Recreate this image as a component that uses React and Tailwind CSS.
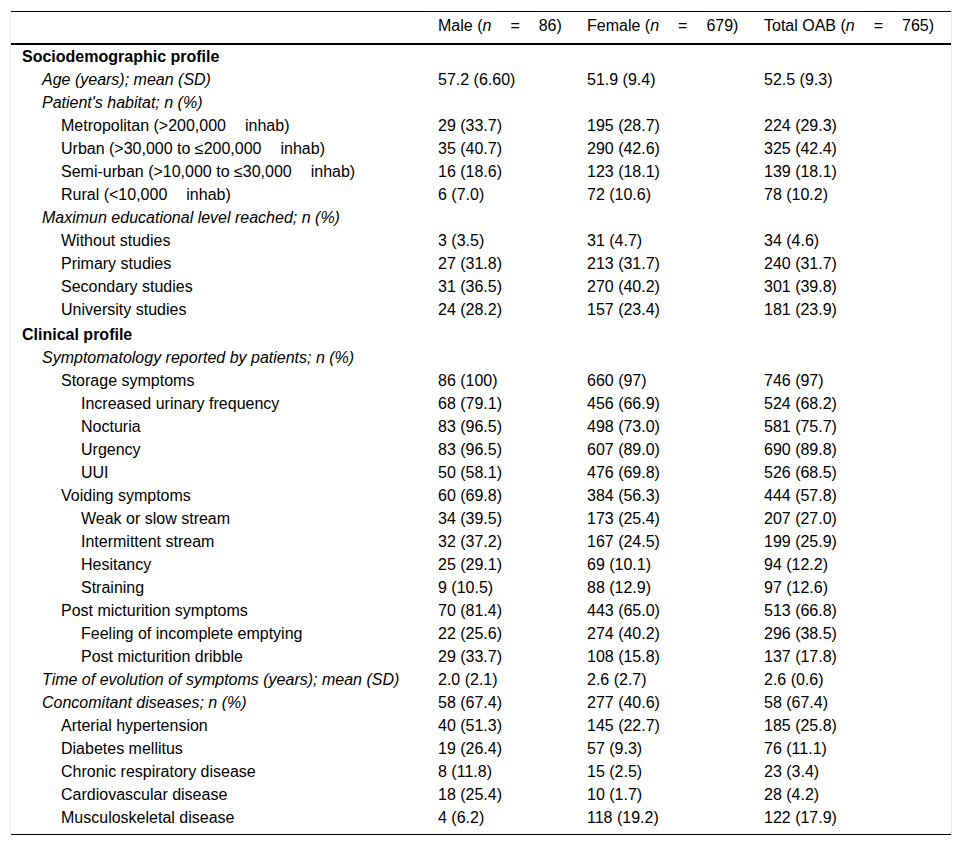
const rows = [
  { label: 'Sociodemographic profile', level: 0, bold: true },
  { label: 'Age (years); mean (SD)', level: 1, italic: true, v: ['57.2 (6.60)', '51.9 (9.4)', '52.5 (9.3)'] },
  { label: "Patient's habitat; n (%)", level: 1, italic: true },
  { label: 'Metropolitan (>200,000|inhab)', level: 2, v: ['29 (33.7)', '195 (28.7)', '224 (29.3)'] },
  { label: 'Urban (>30,000 to ≤200,000|inhab)', level: 2, v: ['35 (40.7)', '290 (42.6)', '325 (42.4)'] },
  { label: 'Semi-urban (>10,000 to ≤30,000|inhab)', level: 2, v: ['16 (18.6)', '123 (18.1)', '139 (18.1)'] },
  { label: 'Rural (<10,000|inhab)', level: 2, v: ['6 (7.0)', '72 (10.6)', '78 (10.2)'] },
  { label: 'Maximun educational level reached; n (%)', level: 1, italic: true },
  { label: 'Without studies', level: 2, v: ['3 (3.5)', '31 (4.7)', '34 (4.6)'] },
  { label: 'Primary studies', level: 2, v: ['27 (31.8)', '213 (31.7)', '240 (31.7)'] },
  { label: 'Secondary studies', level: 2, v: ['31 (36.5)', '270 (40.2)', '301 (39.8)'] },
  { label: 'University studies', level: 2, v: ['24 (28.2)', '157 (23.4)', '181 (23.9)'] },
  { label: 'Clinical profile', level: 0, bold: true, gapAbove: true },
  { label: 'Symptomatology reported by patients; n (%)', level: 1, italic: true },
  { label: 'Storage symptoms', level: 2, v: ['86 (100)', '660 (97)', '746 (97)'] },
  { label: 'Increased urinary frequency', level: 3, v: ['68 (79.1)', '456 (66.9)', '524 (68.2)'] },
  { label: 'Nocturia', level: 3, v: ['83 (96.5)', '498 (73.0)', '581 (75.7)'] },
  { label: 'Urgency', level: 3, v: ['83 (96.5)', '607 (89.0)', '690 (89.8)'] },
  { label: 'UUI', level: 3, v: ['50 (58.1)', '476 (69.8)', '526 (68.5)'] },
  { label: 'Voiding symptoms', level: 2, v: ['60 (69.8)', '384 (56.3)', '444 (57.8)'] },
  { label: 'Weak or slow stream', level: 3, v: ['34 (39.5)', '173 (25.4)', '207 (27.0)'] },
  { label: 'Intermittent stream', level: 3, v: ['32 (37.2)', '167 (24.5)', '199 (25.9)'] },
  { label: 'Hesitancy', level: 3, v: ['25 (29.1)', '69 (10.1)', '94 (12.2)'] },
  { label: 'Straining', level: 3, v: ['9 (10.5)', '88 (12.9)', '97 (12.6)'] },
  { label: 'Post micturition symptoms', level: 2, v: ['70 (81.4)', '443 (65.0)', '513 (66.8)'] },
  { label: 'Feeling of incomplete emptying', level: 3, v: ['22 (25.6)', '274 (40.2)', '296 (38.5)'] },
  { label: 'Post micturition dribble', level: 3, v: ['29 (33.7)', '108 (15.8)', '137 (17.8)'] },
  { label: 'Time of evolution of symptoms (years); mean (SD)', level: 1, italic: true, v: ['2.0 (2.1)', '2.6 (2.7)', '2.6 (0.6)'] },
  { label: 'Concomitant diseases; n (%)', level: 1, italic: true, v: ['58 (67.4)', '277 (40.6)', '58 (67.4)'] },
  { label: 'Arterial hypertension', level: 2, v: ['40 (51.3)', '145 (22.7)', '185 (25.8)'] },
  { label: 'Diabetes mellitus', level: 2, v: ['19 (26.4)', '57 (9.3)', '76 (11.1)'] },
  { label: 'Chronic respiratory disease', level: 2, v: ['8 (11.8)', '15 (2.5)', '23 (3.4)'] },
  { label: 'Cardiovascular disease', level: 2, v: ['18 (25.4)', '10 (1.7)', '28 (4.2)'] },
  { label: 'Musculoskeletal disease', level: 2, v: ['4 (6.2)', '118 (19.2)', '122 (17.9)'] },
]

const indent = ['pl-[11px]', 'pl-[31px]', 'pl-[50px]', 'pl-[70px]']

// wide spaces as they appear in the source table
const Gap = () => <span className="inline-block w-[19px]" />

const Label = ({ text }) => {
  const parts = text.split('|')
  return parts.map((p, i) => (
    <span key={i}>
      {i > 0 && <Gap />}
      {p}
    </span>
  ))
}

const HeadCell = ({ name, n }) => (
  <div className="pl-[12px] whitespace-nowrap">
    {name} (<i>n</i>
    <Gap />=<Gap />
    {n})
  </div>
)

const grid = 'grid grid-cols-[415px_149px_177px_1fr]'

const App = () => {
  return (
    <div className="bg-white min-h-[846px] pt-[11px] text-[16px] text-black" style={{ fontFamily: '"Liberation Sans", Arial, sans-serif' }}>
      <div className="ml-[10px] w-[942px] border-x border-[#ececec]">
        <div className="border-t border-black">
          {/* Header */}
          <div className={`${grid} h-[33px] pt-[5px] border-b-2 border-black leading-[18px]`}>
            <div />
            <HeadCell name="Male" n="86" />
            <HeadCell name="Female" n="679" />
            <HeadCell name="Total OAB" n="765" />
          </div>

          {/* Body */}
          <div className="pb-[5px] border-b border-black">
            {rows.map((r, i) => (
              <div key={i} className={`${grid} ${r.gapAbove ? 'h-[25px] pt-[2px]' : 'h-[23px]'} items-center leading-[18px]`}>
                <div className={`${indent[r.level]} whitespace-nowrap ${r.bold ? 'font-bold' : ''} ${r.italic ? 'italic' : ''}`}>
                  <Label text={r.label} />
                </div>
                {(r.v || ['', '', '']).map((val, j) => (
                  <div key={j} className="pl-[12px] whitespace-nowrap">{val}</div>
                ))}
              </div>
            ))}
          </div>
        </div>
      </div>
    </div>
  )
}

export default App
